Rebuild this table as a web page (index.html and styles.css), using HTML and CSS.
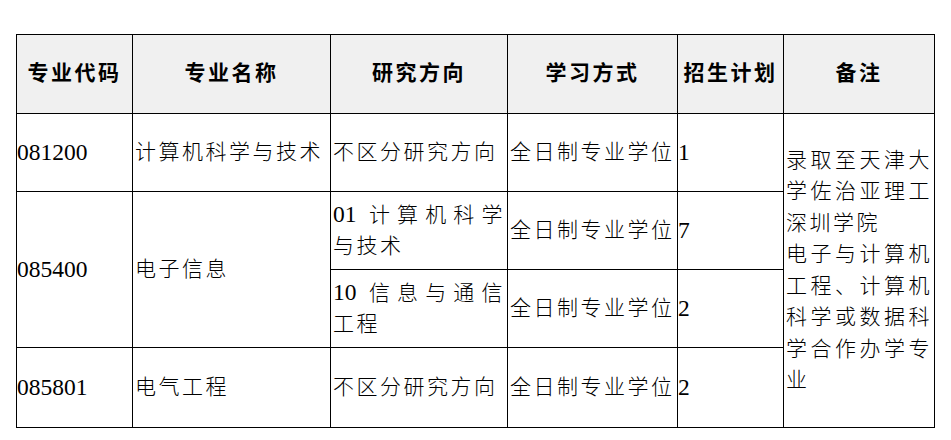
FILE: index.html
```html
<!DOCTYPE html>
<html lang="zh-CN">
<head>
<meta charset="utf-8">
<title>招生计划</title>
<link rel="stylesheet" href="styles.css">
</head>
<body>
<table class="plan">
  <colgroup>
    <col class="c-code">
    <col class="c-name">
    <col class="c-dir">
    <col class="c-mode">
    <col class="c-plan">
    <col class="c-note">
  </colgroup>
  <thead>
    <tr class="row-head">
      <th>专业代码</th>
      <th>专业名称</th>
      <th>研究方向</th>
      <th>学习方式</th>
      <th>招生计划</th>
      <th>备注</th>
    </tr>
  </thead>
  <tbody>
    <tr class="row-a">
      <td class="num">081200</td>
      <td>计算机科学与技术</td>
      <td>不区分研究方向</td>
      <td>全日制专业学位</td>
      <td class="num">1</td>
      <td class="note" rowspan="4">
        <div class="jl">录取至天津大</div>
        <div class="jl">学佐治亚理工</div>
        <div>深圳学院</div>
        <div class="jl">电子与计算机</div>
        <div class="jl">工程、计算机</div>
        <div class="jl">科学或数据科</div>
        <div class="jl">学合作办学专</div>
        <div>业</div>
      </td>
    </tr>
    <tr class="row-b">
      <td class="num" rowspan="2">085400</td>
      <td rowspan="2">电子信息</td>
      <td><div class="jl"><span class="num">01</span> 计算机科学</div><div>与技术</div></td>
      <td>全日制专业学位</td>
      <td class="num">7</td>
    </tr>
    <tr class="row-c">
      <td><div class="jl"><span class="num">10</span> 信息与通信</div><div>工程</div></td>
      <td>全日制专业学位</td>
      <td class="num">2</td>
    </tr>
    <tr class="row-d">
      <td class="num">085801</td>
      <td>电气工程</td>
      <td>不区分研究方向</td>
      <td>全日制专业学位</td>
      <td class="num">2</td>
    </tr>
  </tbody>
</table>
</body>
</html>
```

FILE: styles.css
```css
html, body {
  margin: 0;
  padding: 0;
  background: #ffffff;
}

body {
  font-family: "Liberation Serif", "Noto Sans CJK SC", serif;
  color: #000000;
}

.plan {
  border-collapse: collapse;
  table-layout: fixed;
  width: 919px;
  margin: 34px 0 0 16px;
}

.c-code { width: 116px; }
.c-name { width: 198px; }
.c-dir  { width: 177px; }
.c-mode { width: 170px; }
.c-plan { width: 106px; }
.c-note { width: 151px; }

.plan th,
.plan td {
  border: 1px solid #000000;
  padding: 0 2px;
  vertical-align: middle;
  font-size: 21px;
  line-height: 31.5px;
  letter-spacing: 2.5px;
  font-weight: 300;
  text-align: left;
  white-space: nowrap;
  overflow: hidden;
}

.plan th {
  background: #f0f0f0;
  font-weight: 700;
  text-align: center;
}

.plan .num {
  font-size: 23.5px;
  letter-spacing: 0;
}

.plan td.num {
  padding-left: 0;
}

.jl {
  text-align: justify;
  text-align-last: justify;
}

.row-head { height: 79px; }
.row-a { height: 78px; }
.row-b { height: 78px; }
.row-c { height: 78px; }
.row-d { height: 80px; }
```
